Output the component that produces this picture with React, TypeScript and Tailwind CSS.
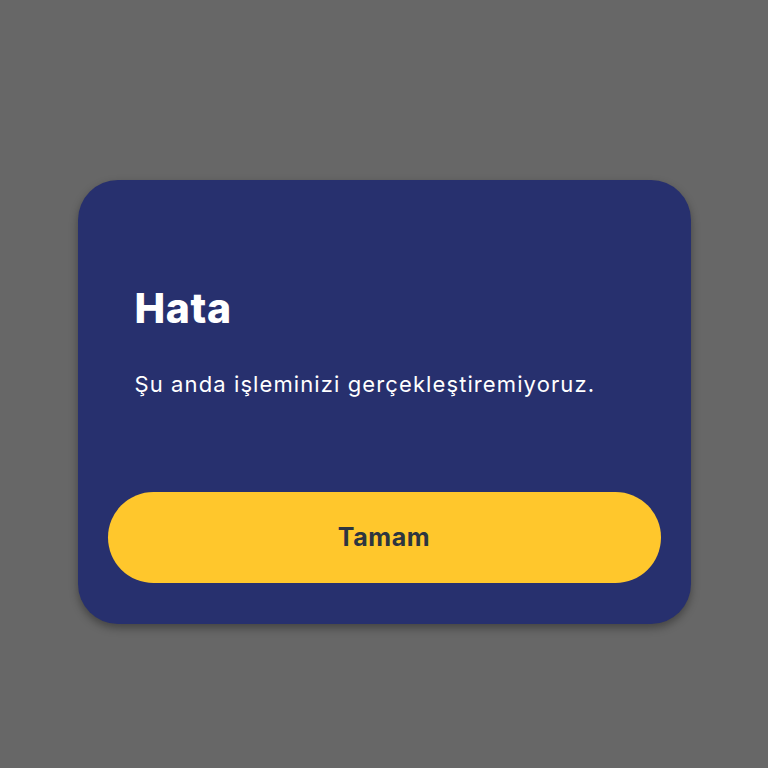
import React from 'react';

export default function App() {
  return (
    <div className="min-h-screen w-full bg-[#676767] flex justify-center pt-[180px]" style={{ fontFamily: 'Inter, "Noto Sans", sans-serif' }}>
      <div className="w-[613px] h-[444px] bg-[#27306e] rounded-[40px] shadow-[0_4px_8px_rgba(0,0,0,0.35)] flex flex-col">
        <div className="px-[57px] pt-[104px]">
          <h1 className="text-[41px] leading-[48px] font-extrabold text-white tracking-[0.6px]">Hata</h1>
          <p className="mt-[38px] text-[22px] leading-[28px] text-white tracking-[1.1px]">Şu anda işleminizi gerçekleştiremiyoruz.</p>
        </div>
        <div className="mt-auto px-[30px] pb-[41px]">
          <button className="w-full h-[91px] rounded-full bg-[#ffc72c] text-[#2d3540] text-[25px] font-bold tracking-[0.6px]">
            Tamam
          </button>
        </div>
      </div>
    </div>
  );
}
